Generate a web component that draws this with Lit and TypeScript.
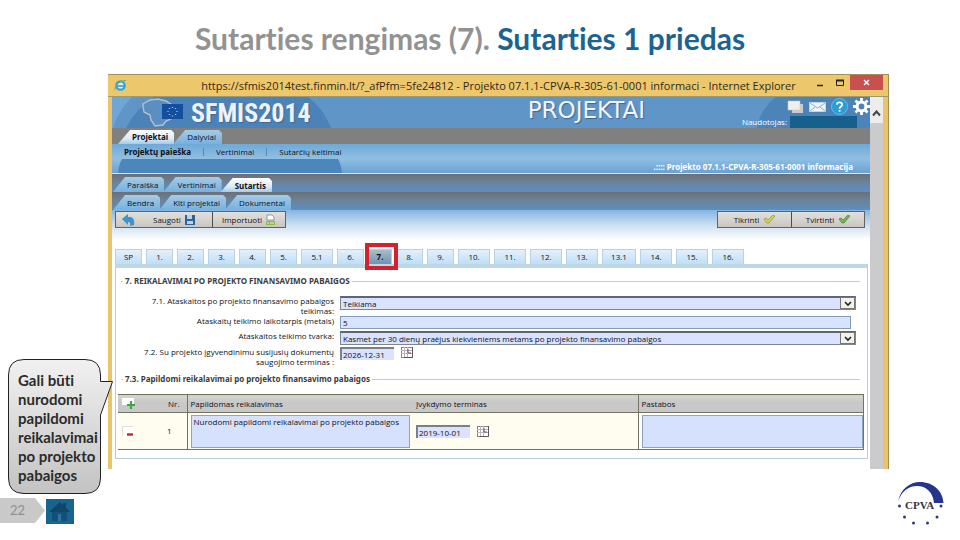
import { LitElement, html, css, svg } from "lit";
import { customElement } from "lit/decorators.js";
import { classMap } from "lit/directives/class-map.js";

const STEPS = ["SP", "1.", "2.", "3.", "4.", "5.", "5.1", "6.", "7.", "8.", "9.", "10.", "11.", "12.", "13.", "13.1", "14.", "15.", "16."];
const ACTIVE_STEP = "7.";

const calendarIcon = svg`
  <rect x="0.5" y="0.5" width="11" height="10" fill="#fff" stroke="#8a8088"/>
  <path d="M0 3.5h12M0 6.5h12M3.5 0v11M6.5 0v11" stroke="#b9b4bd" stroke-width="1" fill="none"/>
  <path d="M7 2v4h3" stroke="#7a4450" stroke-width="1" fill="none"/>
  <path d="M11.5 0v10.5H3" stroke="#5c5360" stroke-width="1" fill="none"/>`;

const chevron = svg`<path d="M2 2l3 3 3-3" stroke="#222" stroke-width="1.6" fill="none"/>`;

const check = (color: string, dark: string) => svg`
  <path d="M1 4l2-1 2 2 5-5 2 1-6 7H4z" fill="${color}" stroke="${dark}" stroke-width=".7"/>`;

@customElement("ie-window")
export class IeWindow extends LitElement {
  static styles = css`
    :host { display: block; font: 8px/10px "Open Sans", "Noto Sans", sans-serif; color: #101016; }
    * { box-sizing: border-box; }
    button, input, select, textarea { font: inherit; color: inherit; border-radius: 0; margin: 0; }
    button { background: none; border: 0; padding: 0; }
    svg { display: block; flex: none; }
    a { color: inherit; text-decoration: none; }
    .frame { border: solid #e9c46b; border-width: 0 5px 0 4px; box-shadow: 1px 0 #a58d56; height: 100%; display: flex; flex-direction: column; }
    .title { background: #edc76c; border-top: 1px solid #a58f5c; border-bottom: 1px solid #9a9a78; height: 23px; margin: 0 -5px 0 -4px; display: flex; align-items: center; padding-left: 6px; }
    .title h2 { flex: 1; min-width: 0; margin: 0; text-align: center; font: 400 11px/20px "Open Sans", "Noto Sans", sans-serif; color: #33291a; white-space: nowrap; padding-left: 60px; }
    .win { display: flex; align-self: flex-start; align-items: center; margin-right: 5px; }
    .win button { height: 15px; width: 20px; display: grid; place-items: center; }
    .win .close { background: #c9504f; width: 33px; }
    .view { flex: 1; display: grid; grid-template-columns: minmax(0, 1fr) 13px; min-height: 0; background: #fff; }
    .page { display: flex; flex-direction: column; min-width: 0; }
    .scroll { background: #cbcbcd; }
    .scroll button { display: grid; place-items: center; width: 100%; height: 26px; background: #ededed; padding-top: 6px; }
    .brand { position: relative; height: 31px; background: #6096c7; display: flex; color: #fff; }
    .deco { position: absolute; top: 0; }
    .deco.left { left: 0; }
    .deco.right { right: 0; }
    .brand > .in { position: relative; }
    .lt { margin: 1px 0 0 30px; }
    .sf { font: 700 26px/33px "Roboto Condensed", "Liberation Sans Narrow", sans-serif; color: #eef3fb; text-shadow: 1px 1px 1px #48688c; margin-left: 7px; }
    .pr { font: 400 23px/27px "DejaVu Sans", sans-serif; color: #f0f5fc; text-shadow: 1px 1px 1px #3e6590; margin: 0 auto; padding-left: 120px; }
    .user { display: flex; flex-direction: column; align-items: flex-end; width: 128px; }
    .tools { display: flex; gap: 5px; height: 19px; align-items: center; }
    .who { display: flex; align-items: center; gap: 3px; padding-right: 13px; }
    .who i { width: 67px; height: 12px; background: #15608c; }
    .tabs { display: flex; align-items: flex-end; }
    .tabs.main { background: #808080; height: 16px; padding-left: 6px; }
    .tabs.sub { background: linear-gradient(#6a7077, #6b8299 45%, #5c8fc1); height: 18px; padding-left: 1px; }
    .tab { height: 14px; line-height: 14px; padding: 0 6px 0 14px; margin-right: -3px; background: linear-gradient(#a5cbe6, #77b1de); clip-path: polygon(0 100%, 12px 0, calc(100% - 3px) 0, 100% 3px, 100% 100%); }
    .tab.on { background: linear-gradient(#fff, #dcebf7 60%, #a3cbe9); font-weight: 700; }
    .sub .tab { height: 15px; line-height: 16px; }
    .sub .tab.on { height: 14px; }
    .tab + .tab { margin-left: 2px; }
    .band { position: relative; height: 30px; border-bottom: 1px solid #d5e5f2; background: linear-gradient(#6fa9d7, #8fbfe2 50%, #79aedb 80%, #6ba1d0); }
    .menu { position: relative; display: flex; height: 16px; line-height: 16px; padding-left: 12px; }
    .menu b, .menu a { padding-right: 12px; }
    .menu b, .crumb, .head, .tab.on { font-family: "Noto Sans", sans-serif; }
    .menu i { width: 1px; height: 8px; background: #6287a8; margin: 4px 12px 0 0; }
    .crumb { position: relative; margin: 0; text-align: right; padding-right: 17px; color: #fff; font-weight: 700; line-height: 13px; }
    .body { flex: 1; background: linear-gradient(#82b5e3, #c7ddef 14px, #fff 30px); padding: 1px 2px 10px 3px; display: flex; flex-direction: column; }
    .bar { display: flex; justify-content: space-between; padding-right: 3px; }
    .group { display: flex; border: 1px solid #63625f; background: linear-gradient(#e2e0dd, #c9c6c2); }
    .group button { height: 15px; display: flex; align-items: center; justify-content: center; gap: 4px; width: 73px; }
    .group button + button { border-left: 1px solid #4d4c4a; }
    .group .save { width: 96px; justify-content: flex-start; padding-left: 6px; }
    .group .save span { margin-left: 14px; }
    .steps { display: flex; gap: 4px; margin-top: 21px; }
    .step { position: relative; height: 15px; width: 27px; background: linear-gradient(#e3f0fb, #bfdff8); border: solid #b8d2e4; border-width: 1px 1px 0 1px; text-align: center; }
    .step.w2 { width: 32px; }
    .step.w3 { width: 34px; }
    .step.on { z-index: 1; width: 24px; background: linear-gradient(#a8bccb, #6f95b0); font-weight: 700; }
    .step.on::after { content: ""; position: absolute; inset: -7px -7px -6px -4px; border: 4px solid #d3222e; }
    .panel { border: 1px solid #b7cbd9; border-top: 4px solid #bed7e7; background: #fff; flex: 1; padding: 8px 3px 8px 2px; }
    .head { display: flex; align-items: center; gap: 2px; margin: 0 4px 0 3px; font-weight: 700; color: #3c3c40; white-space: nowrap; }
    .head::before, .head::after { content: ""; height: 1px; background: #c9c9c9; width: 2px; }
    .head::after { flex: 1; }
    .form { display: grid; grid-template-columns: 213px minmax(0, 1fr); column-gap: 6px; margin: 10px 8px 0 3px; grid-template-rows: 20px 15px 16px 20px; }
    .form label { text-align: right; }
    .field { display: flex; align-items: flex-start; gap: 7px; }
    .sel { flex: 1; min-width: 0; position: relative; }
    select { appearance: none; display: block; width: 100%; height: 14px; border: 1px solid #7d8790; border-top: 2px solid #5d6672; background: #d9e2fe; padding: 0 2px; }
    .sel i { position: absolute; right: 1px; top: 1px; width: 15px; height: 12px; border: 1px solid #77776f; background: #f1f1ee; display: grid; place-items: center; pointer-events: none; }
    input { height: 13px; border: 1px solid #7f9db9; background: #d9e2fe; padding: 0 2px; }
    .full { flex: 1; margin-right: 5px; min-width: 0; }
    .date { width: 54px; border: solid #7b8088; border-width: 2px 0 0 2px; padding: 0 1px; }
    .second { margin-top: 7px; }
    table { width: 100%; border-collapse: collapse; table-layout: fixed; margin-top: 10px; border: solid #73735f; border-width: 1px 1px 1px 0; }
    th { background: linear-gradient(#d6d6d4, #c8c8c8 40%); height: 18px; text-align: left; font-weight: 400; padding: 0 3px; border-bottom: 1px solid #73735f; }
    td { background: #fffcf0; height: 37px; padding: 0 3px; vertical-align: middle; }
    .c1 { width: 69px; border-right: 1px solid #73735f; }
    .c2 { width: 226px; }
    .c3 { width: 225px; }
    .c4 { border-left: 1px solid #73735f; }
    .pair { display: flex; align-items: center; justify-content: space-between; padding: 0 4px 0 1px; }
    td .pair { padding-right: 12px; }
    textarea { display: block; width: 100%; height: 33px; resize: none; border: 1px solid #8aa5bd; background: #d6e1fe; padding: 1px 2px; line-height: 10px; }
    td.c4 { padding-right: 0; background: #fff; }
    td .field { align-items: center; }
  `;

  render() {
    return html`
      <section class="frame">
        <header class="title">
          <svg width="13" height="13" viewBox="0 0 13 13"><circle cx="6.5" cy="6.5" r="4.2" fill="#d9eef2" stroke="#3d9fca" stroke-width="2.2"/><path d="M3 7h8" stroke="#3d9fca" stroke-width="1.6"/><path d="M1 11C0 7 6 1 12 1.6" stroke="#72b56a" fill="none" stroke-width="1.1"/></svg>
          <h2>https://sfmis2014test.finmin.lt/?_afPfm=5fe24812 - Projekto 07.1.1-CPVA-R-305-61-0001 informaci - Internet Explorer</h2>
          <div class="win">
            <button aria-label="Minimize"><svg width="8" height="8"><path d="M1 6.5h6" stroke="#222" stroke-width="1.5"/></svg></button>
            <button aria-label="Maximize"><svg width="8" height="8"><path d="M.5 1v5.5h7V1" fill="none" stroke="#222"/><path d="M0 1.5h8" stroke="#222" stroke-width="2"/></svg></button>
            <button class="close" aria-label="Close"><svg width="7" height="7"><path d="M1 1l5 5M6 1l-5 5" stroke="#fff" stroke-width="1.3"/></svg></button>
          </div>
        </header>
        <div class="view">
          <main class="page">${this.page()}</main>
          <div class="scroll"><button aria-label="Scroll up"><svg width="9" height="7"><path d="M1 5.5l3.5-4 3.5 4" fill="none" stroke="#444" stroke-width="2"/></svg></button></div>
        </div>
      </section>`;
  }

  page() {
    return html`
      <div class="brand">
        <svg class="deco left" width="230" height="31"><path d="M0 31V0h20Q6 14 1 31z" fill="#6fa6d6"/><path d="M14 31Q24 11 42 0H196Q212 12 219 31z" fill="#4b83b8"/></svg>
        <svg class="deco right" width="120" height="31"><path d="M7 31Q10 12 26 0h94v31z" fill="#4c84b9"/></svg>
        <svg class="in lt" width="42" height="29" viewBox="0 0 42 29"><path d="M1 6l7-4 8-1 8 2 6 4 2 5-3 9-5 2-3 4-8 1-4-6-1-5-6-3-1-5z" fill="#5c8fc1" stroke="#b9bfca" stroke-width="1.4"/><rect x="20" y="6" width="21" height="15" fill="#12509f"/><path d="M30.500 9v1M33.500 10v1M35 13v1M33.500 16v1M30.500 17.500v1M27.500 16v1M26 13v1M27.500 10v1" stroke="#c9cc74" stroke-width="1.300"/></svg>
        <span class="in sf">SFMIS2014</span>
        <span class="in pr">PROJEKTAI</span>
        <div class="in user">
          <div class="tools">
            <svg width="17" height="14"><path d="M5 4h11v9H5z" fill="#c8ccd0"/><path d="M1 1h12v9H1z" fill="#f0efeb" stroke="#ccc8c0" stroke-width=".6"/></svg>
            <svg width="17" height="12"><path d="M.5 1.500h16v9H.5z" fill="#eef4fa" stroke="#c3d4e4"/><path d="M1 2l7.500 5L16 2M1 10l5-4M16 10l-5-4" fill="none" stroke="#86a5c2" stroke-width=".9"/></svg>
            <svg width="17" height="17" viewBox="0 0 17 17"><circle cx="8.500" cy="8.500" r="8" fill="#2a9cda" stroke="#7cc4ea" stroke-width=".8"/><path d="M5.800 6.600C6 3.600 11.200 3.600 11.200 6.500c0 2-2.600 2-2.600 4.200M8.600 12v1.800" fill="none" stroke="#fff" stroke-width="1.800"/></svg>
            <svg width="17" height="17" viewBox="0 0 17 17"><circle cx="8.500" cy="8.500" r="4.400" fill="none" stroke="#fff" stroke-width="3"/><path d="M8.500 0v4M8.500 13v4M0 8.500h4M13 8.500h4M2.500 2.500l3 3M11.500 11.500l3 3M14.500 2.500l-3 3M5.500 11.500l-3 3" stroke="#fff" stroke-width="2.800"/></svg>
          </div>
          <div class="who">Naudotojas: <i></i></div>
        </div>
      </div>
      <nav class="tabs main"><a href="#" class="tab on">Projektai</a><a href="#" class="tab">Dalyviai</a></nav>
      <div class="band">
        <svg class="deco left" width="240" height="29"><path d="M6 29Q7 20 10 15H226Q229 20 230 29z" fill="#4c87bb"/></svg>
        <nav class="menu"><b>Projektų paieška</b><i></i><a href="#">Vertinimai</a><i></i><a href="#">Sutarčių keitimai</a></nav>
        <p class="crumb">.:::: Projekto 07.1.1-CPVA-R-305-61-0001 informacija</p>
      </div>
      <nav class="tabs sub"><a href="#" class="tab">Paraiška</a><a href="#" class="tab">Vertinimai</a><a href="#" class="tab on">Sutartis</a></nav>
      <nav class="tabs sub"><a href="#" class="tab">Bendra</a><a href="#" class="tab">Kiti projektai</a><a href="#" class="tab">Dokumentai</a></nav>
      <div class="body">
        <div class="bar">
          <div class="group">
            <button class="save"><svg width="13" height="12"><path d="M0 5l6-5v3h3q4 1 3 8l-4 1q1-4-2-4v3z" fill="#3a94cf"/></svg><span>Saugoti</span><svg width="10" height="10"><path d="M0 0h10v10H0z" fill="#2f6391"/><path d="M2 0h5v4H2zM2 6h6v3H2z" fill="#bcd3e4"/></svg></button>
            <button>Importuoti<svg width="10" height="11"><path d="M1 1h5l2 2v3H1z" fill="#fff" stroke="#777" stroke-width=".7"/><path d="M0 7h9v4H0z" fill="#8fbb4e"/><path d="M2 8v2M5 8v2M7 8v2" stroke="#e8f2d4"/></svg></button>
          </div>
          <div class="group">
            <button>Tikrinti<svg width="12" height="9">${check("#d6cf48", "#93904a")}</svg></button>
            <button>Tvirtinti<svg width="12" height="9">${check("#72b846", "#4e7a45")}</svg></button>
          </div>
        </div>
        <nav class="steps">
          ${STEPS.map((s) => html`<button class=${classMap({ step: true, w2: s.length === 3, w3: s.length === 4, on: s === ACTIVE_STEP })}>${s}</button>`)}
        </nav>
        <div class="panel">
          <div class="head">7. REIKALAVIMAI PO PROJEKTO FINANSAVIMO PABAIGOS</div>
          <div class="form">
            <label for="report">7.1. Ataskaitos po projekto finansavimo pabaigos<br>teikimas:</label>
            <div class="field"><div class="sel"><select id="report"><option>Teikiama</option></select><i><svg width="10" height="7">${chevron}</svg></i></div></div>
            <label for="years">Ataskaitų teikimo laikotarpis (metais)</label>
            <div class="field"><input id="years" class="full" value="5"></div>
            <label for="order">Ataskaitos teikimo tvarka:</label>
            <div class="field"><div class="sel"><select id="order"><option>Kasmet per 30 dienų praėjus kiekvieniems metams po projekto finansavimo pabaigos</option></select><i><svg width="10" height="7">${chevron}</svg></i></div></div>
            <label for="until">7.2. Su projekto įgyvendinimu susijusių dokumentų<br>saugojimo terminas :</label>
            <div class="field"><input id="until" class="date" value="2026-12-31"><svg width="12" height="11">${calendarIcon}</svg></div>
          </div>
          <div class="head second">7.3. Papildomi reikalavimai po projekto finansavimo pabaigos</div>
          <table>
            <thead><tr>
              <th class="c1"><div class="pair"><svg width="13" height="11"><path d="M0 0h12v7H0z" fill="#fff"/><path d="M9 3v8M5 7h8" stroke="#3ea845" stroke-width="2.200"/></svg>Nr.</div></th>
              <th class="c2">Papildomas reikalavimas</th><th class="c3">Įvykdymo terminas</th><th class="c4">Pastabos</th>
            </tr></thead>
            <tbody><tr>
              <td class="c1"><div class="pair"><svg width="13" height="11"><path d="M0 0h12v9H0z" fill="#fff"/><path d="M.5 9V.5H11" fill="none" stroke="#dcdcdc"/><path d="M5 8.500h6" stroke="#b03030" stroke-width="2.400"/></svg>1</div></td>
              <td class="c2"><textarea aria-label="Papildomas reikalavimas">Nurodomi papildomi reikalavimai po projekto pabaigos</textarea></td>
              <td class="c3"><div class="field"><input class="date" aria-label="Įvykdymo terminas" value="2019-10-01"><svg width="12" height="11">${calendarIcon}</svg></div></td>
              <td class="c4"><textarea aria-label="Pastabos"></textarea></td>
            </tr></tbody>
          </table>
        </div>
      </div>`;
  }
}

@customElement("app-root")
export class AppRoot extends LitElement {
  static styles = css`
    :host { display: block; min-height: 100vh; background: #fff; font-family: Lato, "Open Sans", sans-serif; font-variant-ligatures: none; }
    * { box-sizing: border-box; }
    svg { display: block; }
    h1 { margin: 0; height: 74px; padding-right: 20px; text-align: center; font-size: 30px; line-height: 76px; font-weight: 700; color: #929292; }
    h1 span { color: #1c6390; }
    .stage { display: grid; grid-template-columns: 108px minmax(0, 1fr); padding-right: 72px; }
    .side { position: relative; }
    ie-window { min-height: 394px; }
    .callout { position: absolute; left: 8px; bottom: -26px; z-index: 1; width: 106px; height: 136px; }
    .callout svg { position: absolute; inset: 0; }
    .callout p { position: relative; margin: 0; padding: 12px 0 0 10px; font-size: 15px; line-height: 19px; font-weight: 700; color: #2b2b2b; white-space: nowrap; }
    footer { display: flex; align-items: flex-start; padding: 13px 15px 0 0; }
    .num { margin-top: 16px; width: 45px; height: 25px; background: #c9c9c9; clip-path: polygon(0 0, 35px 0, 100% 50%, 35px 100%, 0 100%); color: #8f8f8f; font-size: 13px; line-height: 25px; padding-left: 10px; }
    .home { margin: 17px auto 0 1px; }
    .mark { font: 700 11px "Liberation Serif", serif; }
  `;

  render() {
    return html`
      <h1>Sutarties rengimas (7). <span>Sutarties 1 priedas</span></h1>
      <div class="stage">
        <div class="side">
          <div class="callout">
            <svg width="106" height="136" viewBox="0 0 106 136">
              <defs><linearGradient id="g" x1="0" y1="0" x2="0" y2="1"><stop offset="0" stop-color="#f1f1f1"/><stop offset="1" stop-color="#c3c3c3"/></linearGradient></defs>
              <path d="M16 .500H77Q92.500 .500 92.500 16V22.500H104.500L92.500 56V119Q92.500 134.500 77 134.500H16Q.500 134.500 .500 119V16Q.500 .500 16 .500z" fill="url(#g)" stroke="#222"/>
            </svg>
            <p>Gali būti<br>nurodomi<br>papildomi<br>reikalavimai<br>po projekto<br>pabaigos</p>
          </div>
        </div>
        <ie-window></ie-window>
      </div>
      <footer>
        <div class="num">22</div>
        <a class="home" href="#" aria-label="Home"><svg width="28" height="25"><path d="M0 0h28v25H0z" fill="#17648f"/><path d="M3 13L14 3l3 3V4h3v5l4 4z" fill="#0f4669"/><path d="M6 13h15v9H6z" fill="#12507a"/><path d="M12 15h3v7h-3z" fill="#2b769f"/></svg></a>
        <svg width="47" height="44" viewBox="0 0 47 44" role="img" aria-label="CPVA">
          <path d="M0 20C2 7 12 0 22 0C35 0 45 9 45.500 21H36C35 10 28 4 19 4C10 4 3 10 0 20z" fill="#26348b"/>
          <text class="mark" x="7" y="27" fill="#33333d">CPVA</text>
          <g fill="#2c3a78"><circle cx="1.500" cy="24" r="1.500"/><circle cx="43" cy="24" r="1.500"/><circle cx="6.500" cy="35" r="1.500"/><circle cx="39" cy="35" r="1.500"/><circle cx="15.500" cy="41" r="1.500"/><circle cx="29.500" cy="41" r="1.500"/></g>
        </svg>
      </footer>`;
  }
}
